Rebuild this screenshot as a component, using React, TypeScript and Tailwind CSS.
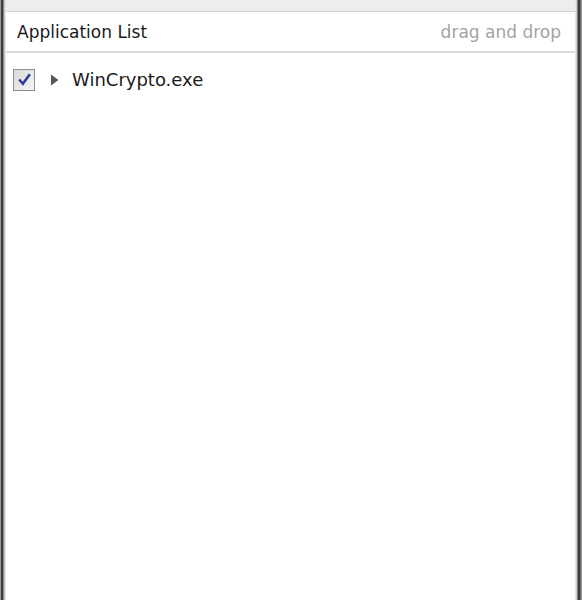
export default function App() {
  return (
    <div className="flex h-[600px] w-[582px] overflow-hidden bg-white font-['DejaVu_Sans',sans-serif]">
      {/* left frame */}
      <div className="flex h-full shrink-0">
        <div className="w-px bg-[#9a9a9a]" />
        <div className="w-[2px] bg-[#3c3c3c]" />
        <div className="w-px bg-[#8a8a8a]" />
        <div className="w-px bg-[#c8c8c8]" />
        <div className="w-px bg-[#e6e6e6]" />
      </div>

      <div className="flex min-w-0 flex-1 flex-col">
        <div className="h-[12px] shrink-0 border-b border-[#d2d2d2] bg-[#ededed]" />
        <div className="flex h-[41px] shrink-0 items-center justify-between border-b-2 border-[#dcdcdc] pl-[11px] pr-[14px] pt-[3px] text-[17px]">
          <span className="text-[#1a1a1a]">Application List</span>
          <span className="text-[#a3a3a3]">drag and drop</span>
        </div>
        <div className="flex-1 pt-[13px]">
          <div className="flex items-center pl-[7px] text-[18px] text-[#1a1a1a]">
            <span className="flex h-[22px] w-[22px] items-center justify-center border border-[#8e8f8f] bg-gradient-to-br from-[#d8d8d8] to-[#f6f6f6]">
              <svg width="15" height="15" viewBox="0 0 14 14">
                <path d="M2 7 L5.5 11 L12 2" fill="none" stroke="#2f3a9e" strokeWidth="2.4" />
              </svg>
            </span>
            <svg className="ml-[15px]" width="9" height="12" viewBox="0 0 9 12">
              <path d="M1 0.5 L8.5 6 L1 11.5 Z" fill="#575757" />
            </svg>
            <span className="ml-[13px]">WinCrypto.exe</span>
          </div>
        </div>
      </div>

      {/* right frame */}
      <div className="flex h-full shrink-0">
        <div className="w-px bg-[#e6e6e6]" />
        <div className="w-px bg-[#c8c8c8]" />
        <div className="w-px bg-[#8a8a8a]" />
        <div className="w-[2px] bg-[#3c3c3c]" />
        <div className="w-px bg-[#6a6a6a]" />
        <div className="w-px bg-[#9a9a9a]" />
      </div>
    </div>
  );
}
